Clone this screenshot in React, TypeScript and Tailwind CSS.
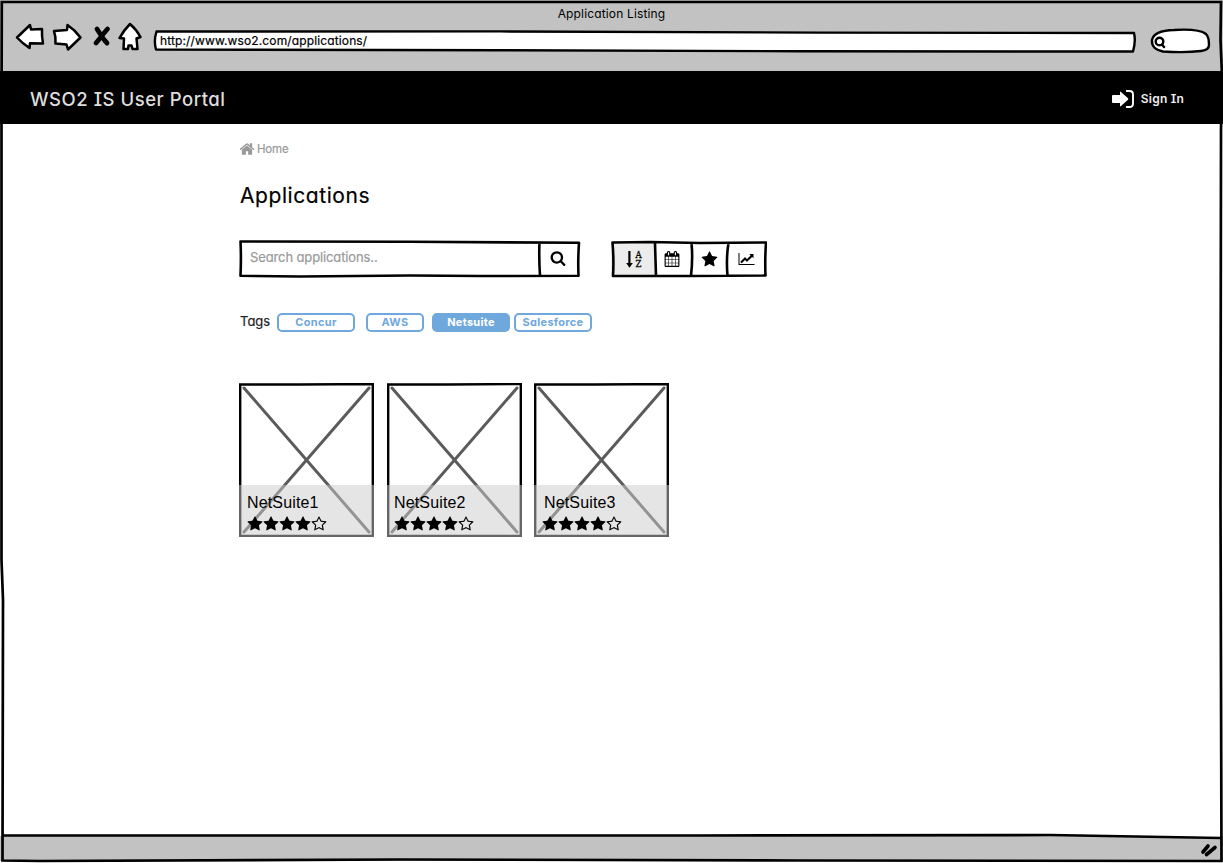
import type { ReactNode } from "react";

const SANS = "font-['Inter',sans-serif] [font-feature-settings:'cv11','cv08'] whitespace-nowrap";

const icons = {
  home: "M1472 992v480q0 26-19 45t-45 19h-384v-384h-256v384h-384q-26 0-45-19t-19-45v-480q0-1 .5-3t.5-3l575-474 575 474q1 2 1 6zm223-69l-62 74q-8 9-21 11h-3q-13 0-21-7l-692-577-692 577q-12 8-24 7-13-2-21-11l-62-74q-8-10-7-23.5t11-21.5l719-599q32-26 76-26t76 26l244 204v-195q0-14 9-23t23-9h192q14 0 23 9t9 23v408l219 182q10 8 11 21.5t-7 23.5z",
  search: "M1216 832q0-185-131.5-316.5t-316.5-131.5-316.5 131.5-131.5 316.5 131.5 316.5 316.5 131.5 316.5-131.5 131.5-316.5zm512 832q0 52-38 90t-90 38q-54 0-90-38l-343-342q-179 124-399 124-143 0-273.5-55.5t-225-150-150-225-55.5-273.5 55.5-273.5 150-225 225-150 273.5-55.5 273.5 55.5 225 150 150 225 55.5 273.5q0 220-124 399l343 343q37 37 37 90z",
  calendar: "M192 1664h288v-288h-288v288zM544 1664h320v-288h-320v288zM192 1312h288v-320h-288v320zM544 1312h320v-320h-320v320zM192 928h288v-288h-288v288zM928 1664h320v-288h-320v288zM544 928h320v-288h-320v288zM1312 1664h288v-288h-288v288zM928 1312h320v-320h-320v320zM576 448v-288q0-13-9.5-22.5t-22.5-9.5h-64q-13 0-22.5 9.5t-9.5 22.5v288q0 13 9.5 22.5t22.5 9.5h64q13 0 22.5-9.5t9.5-22.5zM1312 1312h288v-320h-288v320zM928 928h320v-288h-320v288zM1312 928h288v-288h-288v288zM1344 448v-288q0-13-9.5-22.5t-22.5-9.5h-64q-13 0-22.5 9.5t-9.5 22.5v288q0 13 9.5 22.5t22.5 9.5h64q13 0 22.5-9.5t9.5-22.5zM1728 384v1280q0 52-38 90t-90 38h-1408q-52 0-90-38t-38-90v-1280q0-52 38-90t90-38h128v-96q0-66 47-113t113-47h64q66 0 113 47t47 113v96h384v-96q0-66 47-113t113-47h64q66 0 113 47t47 113v96h128q52 0 90 38t38 90z",
  star: "M1728 647q0 22-26 48l-363 354 86 500q1 7 1 20 0 21-10.5 35.5t-30.5 14.5q-19 0-40-12l-449-236-449 236q-22 12-40 12-21 0-31.5-14.5t-10.5-35.5q0-6 2-20l86-500-364-354q-25-27-25-48 0-37 56-46l502-73 225-455q19-41 49-41t49 41l225 455 502 73q56 9 56 46z",
  starEmpty: "M1201 1004l306-297-422-62-189-382-189 382-422 62 306 297-73 421 378-199 377 199zm527-357q0 22-26 48l-363 354 86 500q1 7 1 20 0 50-41 50-19 0-40-12l-449-236-449 236q-22 12-40 12-21 0-31.5-14.5t-10.5-35.5q0-6 2-20l86-500-364-354q-25-27-25-48 0-37 56-46l502-73 225-455q19-41 49-41t49 41l225 455 502 73q56 9 56 46z",
  chart: "M2048 1536v128h-2048v-1536h128v1408h1920zm-128-1248v435q0 21-19.5 29.5t-35.5-7.5l-121-121-633 633q-10 10-23 10t-23-10l-233-233-416 416-192-192 585-585q10-10 23-10t23 10l233 233 464-464-121-121q-16-16-7.5-35.5t29.5-19.5h435q14 0 23 9t9 23z",
};

function Icon({ d, className, box = "0 0 1792 1792" }: { d: string; className: string; box?: string }) {
  return (
    <svg viewBox={box} className={className} fill="currentColor">
      <path d={d} />
    </svg>
  );
}

function BrowserNav() {
  return (
    <svg viewBox="15 22 130 30" className="h-[30px] w-[130px]" fill="#fff" stroke="#000" strokeWidth="2.5" strokeLinejoin="round" strokeLinecap="round">
      <path d="M17 37.5 L30 25 L31 29.5 L42 29 Q41.6 36 43 43.5 L30 43.3 L29.5 48 Q22 43 17 37.5Z" />
      <path d="M54 31 L67 30 L67.5 25 Q75 30 80.5 37.5 L68 49.5 L66.5 44.5 L55.5 43.5 Q56 37 54 31Z" />
      <path d="M97 29 L101.500 36 Q104 40 107 43 M107.500 29 Q103 34 101 37 L96 43" strokeWidth="4.8" fill="none" />
      <path d="M130 24 Q136 29 140.500 37 L136.500 38.500 L137.500 49 L132.500 49 L131.500 45.500 L128.500 45.500 L128 49 L123.500 49 L124 38.500 L119.500 38Q124 30 130 24Z" />
    </svg>
  );
}

function BrowserHeader() {
  return (
    <header className="h-[71px] bg-[#c2c2c2]">
      <div className={`${SANS} flex h-[22px] justify-center pt-[6px] text-[12px] leading-[15px] tracking-[0.15px]`}>Application Listing</div>
      <div className="flex h-[32px] pl-[15px]">
        <BrowserNav />
        <div className="relative ml-[7px] mt-[7px] h-[24px] w-[986px]">
          <svg viewBox="152 29 986 24" className="absolute inset-0 h-full w-full" fill="#fff" stroke="#000" strokeWidth="2.4" strokeLinejoin="round">
            <path d="M156.500 31.500 L500 31.400 L820 32.600 L1134 33 Q1136 41 1133 51.500 L800 51.300 L500 50.200 L156 49.500 Q153.500 41 156.500 31.500Z" />
          </svg>
          <span className={`${SANS} relative ml-[8px] block pt-[4px] text-[12px] leading-[15px] tracking-[0.13px] [-webkit-text-stroke:0.2px_#000]`}>http://www.wso2.com/applications/</span>
        </div>
        <svg viewBox="1149 27 64 28" className="ml-[11px] mt-[5px] h-[28px] w-[64px]" fill="#fff" stroke="#000" strokeWidth="2.400" strokeLinecap="round">
          <path d="M1152 40 Q1154 30.500 1174 30 Q1199 28.500 1206 34 Q1209 37 1209 45 Q1209 50 1201 51 Q1185 53 1163 51.500 Q1151 49 1152 40Z" />
          <circle cx="1159.500" cy="41.500" r="3.800" />
          <path d="M1162 44.500 L1164 47" />
        </svg>
      </div>
    </header>
  );
}

function PortalBar() {
  return (
    <nav className={`${SANS} flex h-[53px] items-center justify-between bg-black pl-[30px] pr-[39px] pt-[2px]`}>
      <span className="text-[18.5px] font-medium leading-[24px] tracking-[0.53px] text-[#dedede]">WSO2 IS User Portal</span>
      <span className="flex items-center gap-[7px] text-[12px] font-semibold text-[#eee]">
        <svg viewBox="0 0 22 18" className="mt-px h-[18px] w-[22px]" fill="#fff">
          <path d="M1 5 H8 V2.200 Q8 .9 9 1.900 L16 8.300 Q16.700 9 16 9.700 L9 16.100 Q8 17 8 15.700 V13 H1 Q0 13 0 12 V6 Q0 5 1 5Z" />
          <path d="M14 1 H17.500 Q21 1 21 4.500 V13.500 Q21 17 17.500 17 H14" fill="none" stroke="#fff" strokeWidth="1.900" />
        </svg>
        <span className="tracking-[0.2px]">Sign In</span>
      </span>
    </nav>
  );
}

function SearchBox() {
  return (
    <div className="relative flex h-[38px] w-[342px]">
      <div className={`${SANS} w-[301px] pl-[11px] pt-[7px] text-[13px] leading-[20px] tracking-[-0.12px] text-[#999] [-webkit-text-stroke:0.2px_#999]`}>Search applications..</div>
      <button className="flex flex-1 items-center justify-center pb-[2px] pr-[5px]" aria-label="Search">
        <Icon d={icons.search} className="h-[16px] w-[16px]" />
      </button>
      <svg viewBox="239 240 342 38" className="absolute inset-0 h-full w-full" fill="none" stroke="#000" strokeWidth="2.600" strokeLinejoin="round">
        <path d="M240.500 241.500 L410 241.800 L579 242.800 Q577.800 260 578.500 275.800 L480 276 L410 275.500 L300 276.500 L240.500 275.800 Q241.300 258 240.500 241.500Z M539.500 242 Q538.800 258 540 275.500" />
      </svg>
    </div>
  );
}

function SortGroup() {
  return (
    <div className="relative flex h-[38px] w-[156px] items-stretch pt-[2px]">
      <button className="flex h-[34px] w-[44px] items-center justify-center gap-[2px] bg-[#ececec] pl-[2px]">
        <svg viewBox="0 0 7 17" className="h-[17px] w-[7px]" fill="#000">
          <path d="M2.300 0h2.200v12h2.300L3.500 16.800 .2 12h2.100z" />
        </svg>
        <span className="flex flex-col pt-[2px] text-center font-['DejaVu_Serif',serif] text-[8.5px] font-normal leading-[9px] [-webkit-text-stroke:0.3px_#000]">
          <span>A</span>
          <span>Z</span>
        </span>
      </button>
      <button className="flex w-[36px] items-center justify-center pb-[2px] pr-[3px]">
        <Icon d={icons.calendar} className="h-[16px] w-[16px]" />
      </button>
      <button className="flex w-[36px] items-center justify-center pb-[2px]">
        <Icon d={icons.star} className="h-[17px] w-[17px]" />
      </button>
      <button className="flex w-[39px] items-center justify-center pb-[2px]">
        <Icon d={icons.chart} box="0 0 2048 1792" className="h-[14px] w-[17px]" />
      </button>
      <svg viewBox="611 240 156 38" className="absolute inset-0 h-full w-full" fill="none" stroke="#000" strokeWidth="2.600" strokeLinejoin="round">
        <path d="M612.500 242.500 L650 242 L700 243 L766 242.500 Q764.800 260 765.500 275.500 L690 276 L613 276 Q614 260 612.500 242.500Z M655 243 L656 276 M691.500 243 Q693 258 691 276 M728.500 243 Q726 258 727.500 276" />
      </svg>
    </div>
  );
}

function Tag({ children, className }: { children: ReactNode; className: string }) {
  return (
    <span className={`flex h-[19px] items-center justify-center rounded-[5px] border-2 border-[#6fa8dc] pb-[2px] text-[11px] font-bold leading-[14px] tracking-[0.3px] ${className}`}>
      {children}
    </span>
  );
}

function AppCard({ name, className, labelClass, starsClass }: { name: string; className: string; labelClass: string; starsClass: string }) {
  return (
    <article className={`relative flex h-[154px] w-[135px] flex-col justify-end ${className}`}>
      <svg viewBox="0 0 135 154" className="absolute inset-0 h-full w-full" fill="none">
        <path d="M1.200 1.500 L60 1.500 L133.800 1 V153 H1.200Z" stroke="#000" strokeWidth="2.400" />
        <path d="M5 5 L130 149 M130 5 L5 149" stroke="#5b5b5b" strokeWidth="3" strokeLinecap="round" />
      </svg>
      <div className="relative h-[52px] bg-[#cccccc]/50 pt-[8px]">
        <div className={`font-['Liberation_Sans',sans-serif] text-[16px] leading-[20px] tracking-[0.15px] ${labelClass}`}>{name}</div>
        <div className={`mt-[3px] flex ${starsClass}`}>
          {[0, 1, 2, 3, 4].map((i) => (
            <Icon key={i} d={i < 4 ? icons.star : icons.starEmpty} className="h-[16px] w-[16px]" />
          ))}
        </div>
      </div>
    </article>
  );
}

export default function App() {
  return (
    <div className="relative flex h-[863px] w-[1223px] flex-col overflow-hidden bg-white text-black">
      <BrowserHeader />
      <PortalBar />
      <main className="h-[712px] pl-[239px]">
        <div className={`${SANS} flex h-[52px] items-center gap-[2px] text-[11.5px] tracking-[-0.2px] text-[#999]`}>
          <Icon d={icons.home} className="mt-[-3px] h-[16px] w-[16px]" />
          <span className="[-webkit-text-stroke:0.2px_#999]">Home</span>
        </div>
        <h1 className={`${SANS} h-[63px] pl-px pt-[6px] text-[21px] leading-[28px] tracking-[0.57px] [-webkit-text-stroke:0.2px_#000]`}>Applications</h1>
        <div className="flex gap-[30px] pt-px">
          <SearchBox />
          <SortGroup />
        </div>
        <div className={`${SANS} mt-[35px] flex h-[19px] items-center`}>
          <span className="w-[38px] pb-[2px] pl-px text-[13px] text-[#222] [-webkit-text-stroke:0.2px_#222]">Tags</span>
          <Tag className="w-[78px] text-[#6fa8dc]">Concur</Tag>
          <Tag className="ml-[11px] w-[58px] text-[#6fa8dc]">AWS</Tag>
          <Tag className="ml-[8px] w-[78px] bg-[#6fa8dc] text-white">Netsuite</Tag>
          <Tag className="ml-[4px] w-[78px] text-[#6fa8dc]">Salesforce</Tag>
        </div>
        <div className="mt-[51px] flex">
          <AppCard name="NetSuite1" className="" labelClass="pl-[8px]" starsClass="pl-[8px]" />
          <AppCard name="NetSuite2" className="ml-[13px]" labelClass="pl-[7px]" starsClass="pl-[7px]" />
          <AppCard name="NetSuite3" className="ml-[12px]" labelClass="pl-[10px]" starsClass="pl-[8px]" />
        </div>
      </main>
      <footer className="h-[25px] bg-[#c2c2c2]" />
      <svg viewBox="0 0 1223 863" className="pointer-events-none absolute inset-0 h-full w-full" fill="none" stroke="#000" strokeWidth="2.700">
        <path d="M700 835 L1050 835 L1221 838 V830 H700Z" fill="#fff" stroke="none" />
        <path d="M1.800 2 H1221 L1220.500 40 L1222 75 L1221 130 L1220.500 500 L1221.500 861 L800 860.500 L400 859.500 L40 861 L2.500 860.500 L3 600 L1.500 560 L1.500 124Z" />
        <path d="M2 835.500 H700 L1050 835 L1221 838" />
        <path d="M1203 852 L1208 846 M1206.500 854.500 L1215 847.500" strokeWidth="3.600" strokeLinecap="round" />
      </svg>
    </div>
  );
}
